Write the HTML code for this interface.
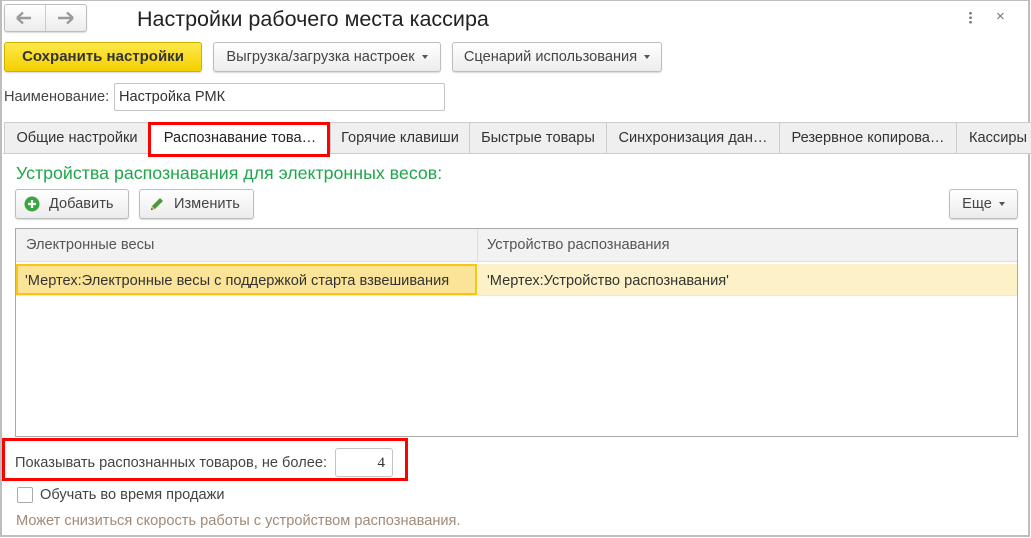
<!DOCTYPE html>
<html><head><meta charset="utf-8"><style>
*{box-sizing:border-box;margin:0;padding:0}
body{width:1031px;height:538px;background:#fff;font-family:"Liberation Sans",Arial,sans-serif;font-size:14.6px;color:#333;position:relative;overflow:hidden}
.a{position:absolute;white-space:nowrap}
.frame{left:0;top:0;width:1030px;height:537px;border:2px solid #bdbdbd;border-top:1px solid #bdbdbd}
.btn{position:absolute;height:30px;border:1px solid #bdbdbd;border-radius:3px;background:linear-gradient(#fff,#ececec);box-shadow:0 1px 1px rgba(0,0,0,.15);line-height:28px;text-align:center;color:#444;white-space:nowrap}
.tri{display:inline-block;width:0;height:0;border-left:3.5px solid transparent;border-right:3.5px solid transparent;border-top:4px solid #555;vertical-align:middle;margin-left:7px}
.tab{position:absolute;top:122px;height:32px;border:1px solid #ccc;background:#efefef;line-height:30px;color:#333;text-align:center;white-space:nowrap;overflow:hidden}
.red{position:absolute;border:3px solid #f00}
</style></head><body>
<div class="a frame"></div>
<div class="btn" style="left:4px;top:4px;width:83px;height:28px;"></div>
<div class="a" style="left:45px;top:5px;width:1px;height:26px;background:#ccc"></div>
<svg class="a" style="left:15px;top:11px" width="20" height="14"><path d="M2 7H16M2 7L8 1.5M2 7L8 12.5" stroke="#9a9a9a" stroke-width="2.4" fill="none"/></svg>
<svg class="a" style="left:55px;top:11px" width="20" height="14"><path d="M18 7H3M18 7L12 1.5M18 7L12 12.5" stroke="#9a9a9a" stroke-width="2.4" fill="none"/></svg>
<div class="a" style="left:137px;top:7px;font-size:21.5px;color:#222">Настройки рабочего места кассира</div>
<div class="a" style="left:969px;top:11px;width:3px;height:13px;background:radial-gradient(circle,#777 1.2px,transparent 1.5px) 0 0/3px 4.5px"></div>
<div class="a" style="left:996px;top:8px;font-size:15px;color:#777">×</div>
<div class="btn" style="left:4px;top:42px;width:198px;background:linear-gradient(#ffe94a,#f3d000);border-color:#d1b000;color:#333;font-weight:bold;font-size:15px">Сохранить настройки</div>
<div class="btn" style="left:213px;top:42px;width:228px">Выгрузка/загрузка настроек<span class="tri"></span></div>
<div class="btn" style="left:452px;top:42px;width:210px">Сценарий использования<span class="tri"></span></div>
<div class="a" style="left:4px;top:89px;color:#444">Наименование:</div>
<div class="a" style="left:114px;top:83px;width:331px;height:28px;border:1px solid #c4c4c4;border-radius:2px;padding:5px 4px;color:#333">Настройка РМК</div>
<div class="a" style="left:3px;top:153px;width:1025px;height:1px;background:#ccc"></div>
<div class="tab" style="left:4px;width:146px">Общие настройки</div>
<div class="tab" style="left:149px;width:182px;background:#fff;border-bottom-color:#fff;color:#222">Распознавание това…</div>
<div class="tab" style="left:330px;width:140px">Горячие клавиши</div>
<div class="tab" style="left:469px;width:138px">Быстрые товары</div>
<div class="tab" style="left:606px;width:174px">Синхронизация дан…</div>
<div class="tab" style="left:779px;width:178px">Резервное копирова…</div>
<div class="tab" style="left:956px;width:80px;text-align:left;padding-left:12px">Кассиры</div>
<div class="red" style="left:148px;top:122px;width:182px;height:35px"></div>
<div class="a" style="left:16px;top:163px;font-size:17.8px;color:#1fa64a">Устройства распознавания для электронных весов:</div>
<div class="btn" style="left:15px;top:189px;width:114px;text-align:left;padding-left:33px">Добавить</div>
<svg class="a" style="left:24px;top:196px" width="16" height="16"><circle cx="8" cy="8" r="7.5" fill="#3aa63f"/><path d="M8 4V12M4 8H12" stroke="#fff" stroke-width="2.2"/></svg>
<div class="btn" style="left:139px;top:189px;width:115px;text-align:left;padding-left:34px">Изменить</div>
<svg class="a" style="left:148px;top:195px" width="18" height="18"><path d="M3 15L4 11L12 3L15 6L7 14Z" fill="#4a9a3a"/><path d="M3 15L4 11L7 14Z" fill="#e8b070"/><path d="M3 15L3.6 13L5 14.4Z" fill="#333"/></svg>
<div class="btn" style="left:949px;top:189px;width:69px">Еще<span class="tri"></span></div>
<div class="a" style="left:15px;top:228px;width:1003px;height:209px;border:1px solid #a9a9a9;background:#fff"></div>
<div class="a" style="left:16px;top:229px;width:1001px;height:33px;background:#f2f2f2;border-bottom:1px solid #ddd"></div>
<div class="a" style="left:477px;top:229px;width:1px;height:33px;background:#ddd"></div>
<div class="a" style="left:26px;top:237px;color:#555">Электронные весы</div>
<div class="a" style="left:487px;top:237px;color:#555">Устройство распознавания</div>
<div class="a" style="left:16px;top:264px;width:1001px;height:32px;background:#fdf2c7;border-bottom:1px solid #e8e8e8"></div>
<div class="a" style="left:16px;top:264px;width:461px;height:31px;background:#fbe497;border:2px solid #f5c518"></div>
<div class="a" style="left:25px;top:273px;color:#333">'Мертех:Электронные весы с поддержкой старта взвешивания</div>
<div class="a" style="left:487px;top:273px;color:#333">'Мертех:Устройство распознавания'</div>
<div class="a" style="left:15px;top:455px;color:#444">Показывать распознанных товаров, не более:</div>
<div class="a" style="left:335px;top:448px;width:58px;height:29px;border:1px solid #c4c4c4;border-radius:3px;text-align:right;padding:6px 7px;font-family:'Liberation Serif',serif;font-size:15px;color:#333">4</div>
<div class="red" style="left:2px;top:438px;width:406px;height:43px"></div>
<div class="a" style="left:17px;top:487px;width:16px;height:16px;border:1px solid #aaa;border-radius:2px"></div>
<div class="a" style="left:40px;top:487px;color:#444">Обучать во время продажи</div>
<div class="a" style="left:16px;top:513px;color:#a08a78">Может снизиться скорость работы с устройством распознавания.</div>
</body></html>
